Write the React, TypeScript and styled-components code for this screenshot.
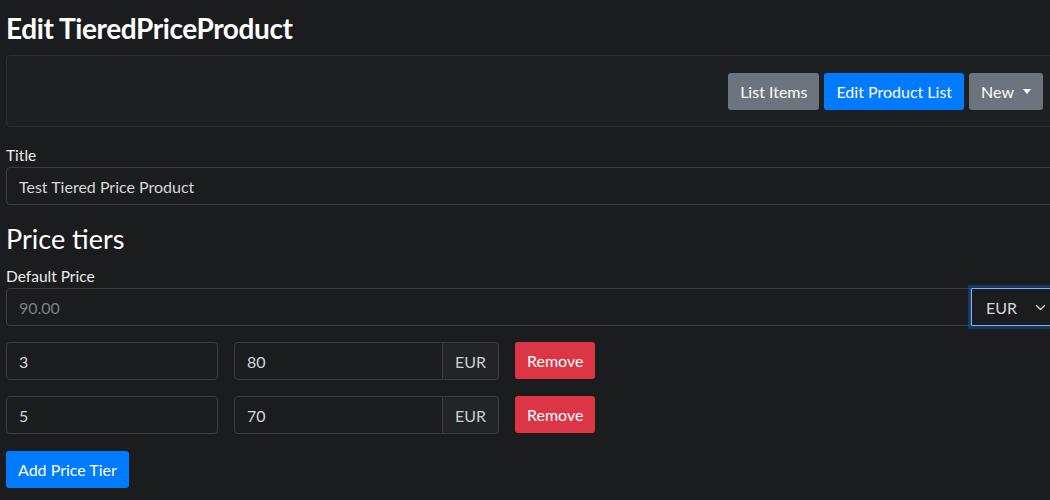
import styled, { createGlobalStyle } from 'styled-components'

const GlobalStyle = createGlobalStyle`
  html, body {
    margin: 0;
    padding: 0;
    background: #1b1c1e;
    overflow: hidden;
  }
  body {
    font-family: Lato, "Liberation Sans", sans-serif;
    color: #e6e7e8;
  }
  * {
    box-sizing: border-box;
  }
`

const Page = styled.div`
  width: 1060px;
  padding: 11px 0 0 6px;
`

const Heading = styled.h1`
  margin: 0 0 10px;
  font-size: 28px;
  font-weight: 700;
  line-height: 34px;
  letter-spacing: -0.4px;
  color: #ffffff;
`

const Toolbar = styled.div`
  display: flex;
  justify-content: flex-end;
  gap: 5px;
  padding: 17px 16px 16px;
  background: #1d2022;
  border: 1px solid #2c2f31;
  border-radius: 4px;
  margin-bottom: 16px;
`

const Button = styled.button<{ $variant: 'primary' | 'secondary' | 'danger' }>`
  height: 37px;
  padding: 0 12px;
  border: none;
  border-radius: 3px;
  font-family: inherit;
  font-size: 16px;
  color: #ffffff;
  display: inline-flex;
  align-items: center;
  gap: 9px;
  background: ${(p) =>
    p.$variant === 'primary' ? '#007bff' : p.$variant === 'danger' ? '#dc3545' : '#6c757d'};
`

const Caret = styled.span`
  width: 0;
  height: 0;
  border-left: 4px solid transparent;
  border-right: 4px solid transparent;
  border-top: 5px solid #ffffff;
`

const Label = styled.label`
  display: block;
  font-size: 15.5px;
  line-height: 24px;
  color: #eceeef;
`

const Input = styled.input<{ $width?: number }>`
  display: block;
  width: ${(p) => (p.$width ? `${p.$width}px` : '100%')};
  height: 38px;
  padding: 6px 12px;
  font-family: inherit;
  font-size: 16px;
  color: #d4d7da;
  background: #1b1c1e;
  border: 1px solid #3b3d40;
  border-radius: 4px;
  outline: none;

  &::placeholder {
    color: #7b7e82;
  }
`

const SubHeading = styled.h3`
  margin: 17px 0 8px;
  font-size: 27px;
  font-weight: 400;
  line-height: 34px;
  color: #ffffff;
`

const InputGroup = styled.div`
  display: flex;
  align-items: stretch;
`

const GroupInput = styled(Input)`
  flex: 1;
  min-width: 0;
  border-top-right-radius: 0;
  border-bottom-right-radius: 0;
`

const Select = styled.div`
  width: 89px;
  height: 38px;
  display: flex;
  align-items: center;
  justify-content: space-between;
  padding: 0 13px 0 14px;
  font-size: 16px;
  color: #d4d7da;
  background: #1b1c1e;
  border: 1px solid #7fb2f5;
  border-radius: 0 4px 4px 0;
  box-shadow: 0 0 0 3px rgba(13, 90, 180, 0.45);
`

const Addon = styled.span`
  display: flex;
  align-items: center;
  padding: 0 12px;
  font-size: 16px;
  color: #c9ccd0;
  background: #212528;
  border: 1px solid #3b3d40;
  border-left: none;
  border-radius: 0 4px 4px 0;
`

const TierRow = styled.div`
  display: flex;
  gap: 16px;
  margin-top: 16px;
`

const PriceGroup = styled(InputGroup)`
  width: 265px;
`

const Footer = styled.div`
  margin-top: 17px;
`

const tiers = [
  { qty: '3', price: '80' },
  { qty: '5', price: '70' },
]

export default function App() {
  return (
    <>
      <GlobalStyle />
      <Page>
        <Heading>Edit TieredPriceProduct</Heading>
        <Toolbar>
          <Button $variant="secondary">List Items</Button>
          <Button $variant="primary">Edit Product List</Button>
          <Button $variant="secondary">
            New <Caret />
          </Button>
        </Toolbar>

        <Label>Title</Label>
        <Input defaultValue="Test Tiered Price Product" />

        <SubHeading>Price tiers</SubHeading>
        <Label>Default Price</Label>
        <InputGroup>
          <GroupInput placeholder="90.00" />
          <Select>
            EUR
            <svg width="11" height="11" viewBox="0 0 16 16" fill="none">
              <path d="M2 5l6 6 6-6" stroke="#d4d7da" strokeWidth="1.8" strokeLinecap="round" strokeLinejoin="round" />
            </svg>
          </Select>
        </InputGroup>

        {tiers.map((t) => (
          <TierRow key={t.qty}>
            <Input $width={212} defaultValue={t.qty} />
            <PriceGroup>
              <GroupInput defaultValue={t.price} />
              <Addon>EUR</Addon>
            </PriceGroup>
            <Button $variant="danger">Remove</Button>
          </TierRow>
        ))}

        <Footer>
          <Button $variant="primary">Add Price Tier</Button>
        </Footer>
      </Page>
    </>
  )
}
